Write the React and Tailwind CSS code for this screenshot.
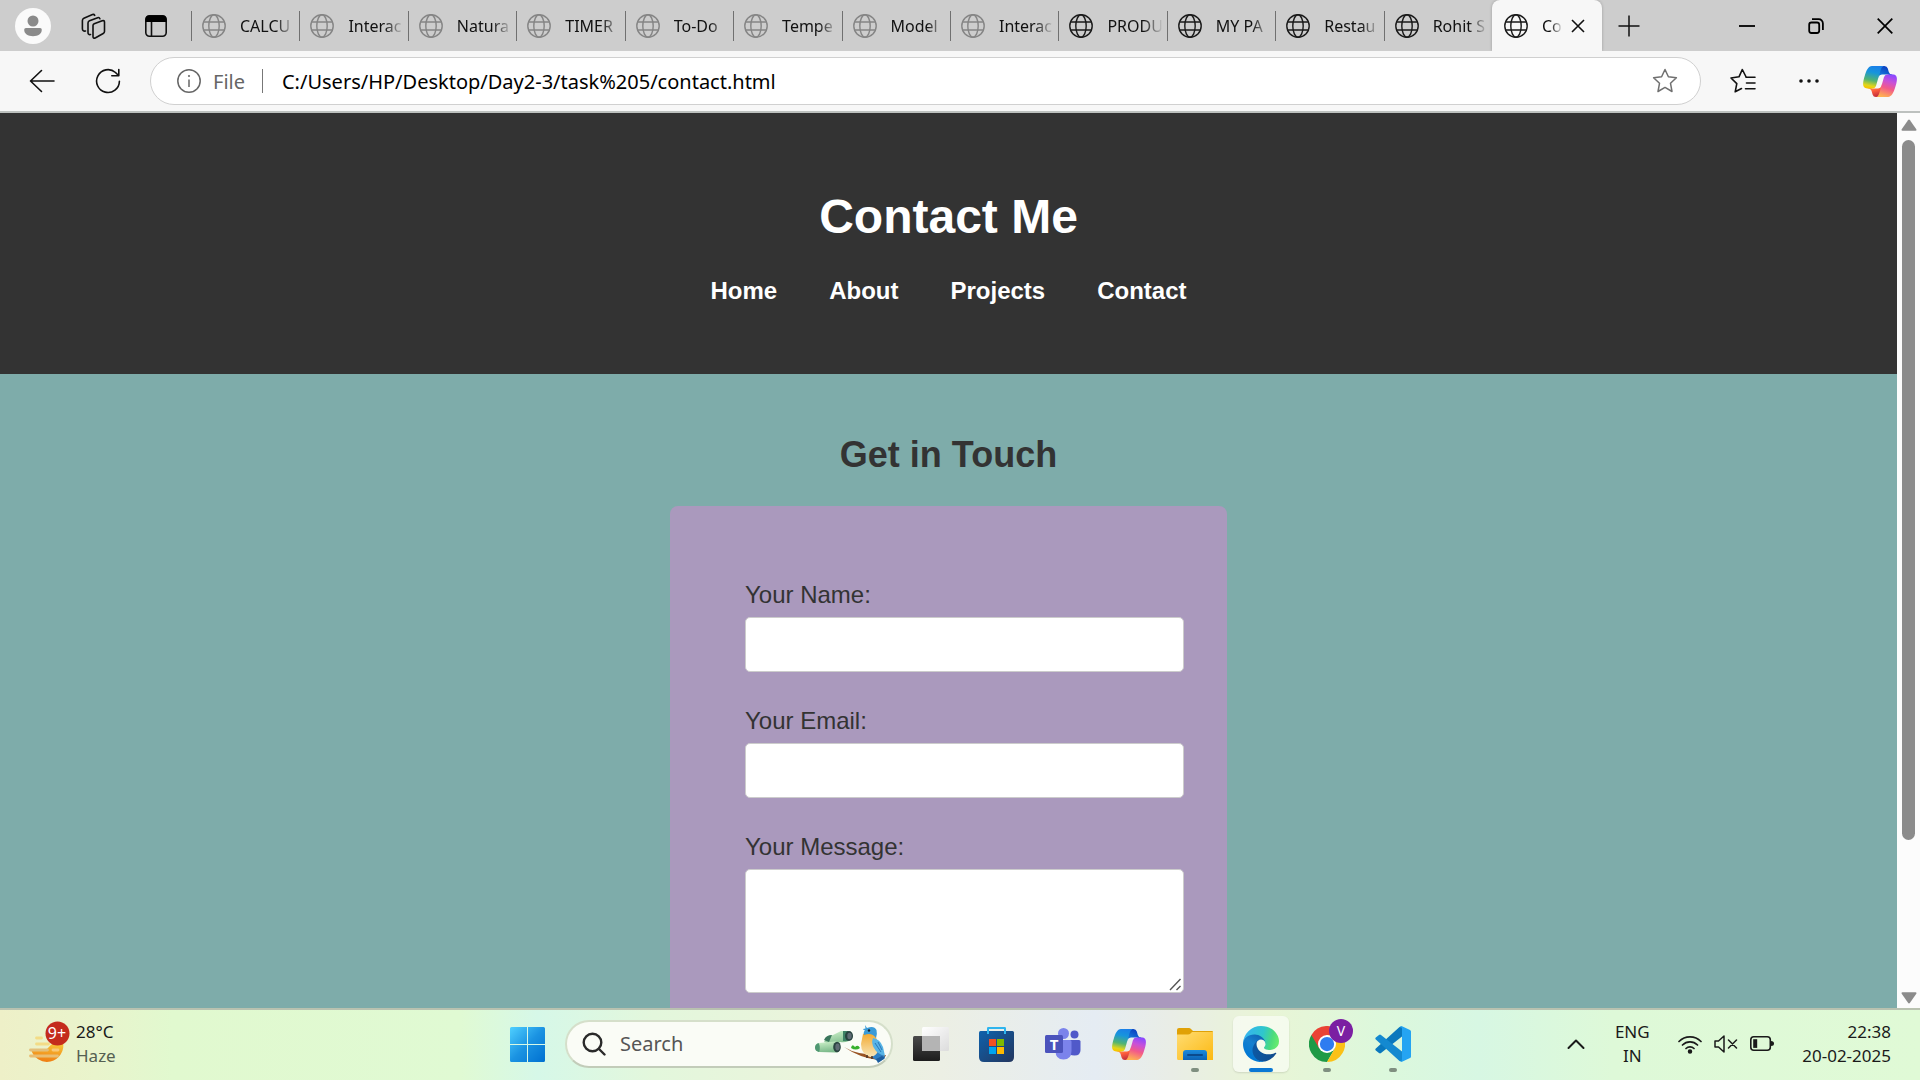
import React from "react";

const tabs = [
  { title: "CALCU", dim: true },
  { title: "Interac", dim: true },
  { title: "Natura", dim: true },
  { title: "TIMER", dim: true },
  { title: "To-Do", dim: true },
  { title: "Tempe", dim: true },
  { title: "Model", dim: true },
  { title: "Interac", dim: true },
  { title: "PRODU" },
  { title: "MY PA" },
  { title: "Restau" },
  { title: "Rohit S" },
];

function Globe({ dim }) {
  return (
    <svg
      viewBox="0 0 24 24"
      fill="none"
      strokeWidth="1.4"
      className={dim ? "size-6 shrink-0 stroke-[#858585]" : "size-6 shrink-0 stroke-[#1a1a1a]"}
      aria-hidden="true"
    >
      <circle cx="12" cy="12" r="11.2" />
      <ellipse cx="12" cy="12" rx="5.2" ry="11.2" />
      <path d="M2 8h20M2 16h20" />
    </svg>
  );
}

function Tab({ title, dim }) {
  return (
    <button type="button" className="flex min-w-0 flex-1 items-center">
      <span className="h-[30px] w-px shrink-0 bg-[#707070]" />
      <span className="flex min-w-0 flex-1 items-center gap-3.5 pr-1 pl-2.5">
        <Globe dim={dim} />
        <span className="min-w-0 flex-1 overflow-hidden text-left text-base leading-6 whitespace-nowrap [mask-image:linear-gradient(to_right,black_65%,transparent)]">
          {title}
        </span>
      </span>
    </button>
  );
}

function TabStrip() {
  return (
    <div className="flex h-[51px] items-center bg-[#cdcdcd] text-[#111]">
      <div className="flex w-[191px] shrink-0 items-center pl-[15px]">
        <button type="button" aria-label="Profile" className="grid size-9 place-items-center rounded-full bg-[#fafafa]">
          <svg viewBox="0 0 36 36" className="size-9" fill="#8a8a8a" aria-hidden="true">
            <circle cx="18" cy="13" r="5.5" />
            <path d="M11 20h14a1.8 1.8 0 0 1 1.8 1.8c0 4-3.600 6.400-8.800 6.400s-8.800-2.400-8.800-6.400A1.800 1.800 0 0 1 11 20z" />
          </svg>
        </button>
        <button type="button" aria-label="Workspaces" className="ml-[29px]">
          <svg viewBox="0 0 26 26" className="size-[26px]" fill="none" stroke="#111" strokeWidth="1.600" strokeLinejoin="round" strokeLinecap="round" aria-hidden="true">
            <path d="M13 12.500q0-1.200 1.200-1.700l8-3q2.300-.8 2.300 1.400v9.300q0 1.300-1.300 2l-7.600 4.200Q13 26 13 23.400z" />
            <path d="M10.500 21.500Q8 22 8 19.500V10q0-1.500 1.500-2.200l8.200-3.100q1.600-.6 2.200 1" />
            <path d="M5.500 18Q2.400 18.500 2.400 15.800V7.500q0-1.500 1.500-2.200L12.500 1.600q1.500-.6 2.200.8" />
          </svg>
        </button>
        <button type="button" aria-label="Tab actions" className="ml-[38px]">
          <svg viewBox="0 0 24 24" className="size-6" aria-hidden="true">
            <rect x="1.800" y="1.800" width="20.400" height="20.400" rx="3.600" fill="none" stroke="#111" strokeWidth="1.600" />
            <path d="M1.500 8V5.500a4 4 0 0 1 4-4h13a4 4 0 0 1 4 4V8z" fill="#000" />
            <path d="M7.500 8v14" stroke="#111" strokeWidth="1.600" />
          </svg>
        </button>
      </div>
      <div className="flex min-w-0 flex-1">
        {tabs.map((t, i) => (
          <Tab key={i} {...t} />
        ))}
      </div>
      <div className="flex w-[110px] shrink-0 items-center self-stretch rounded-t-lg bg-[#f7f7f7] pr-[17px] pl-3 shadow-[0_0_3px_rgba(0,0,0,0.25)] [clip-path:inset(-4px_-4px_0_-4px)]">
        <Globe />
        <span className="ml-3.5 w-[21px] overflow-hidden text-base leading-6 whitespace-nowrap [mask-image:linear-gradient(to_right,black_40%,transparent)]">
          Co
        </span>
        <button type="button" aria-label="Close tab" className="ml-auto">
          <svg viewBox="0 0 14 14" className="size-3.5" stroke="#111" strokeWidth="1.600" aria-hidden="true">
            <path d="M1 1l12 12M13 1L1 13" />
          </svg>
        </button>
      </div>
      <div className="flex w-[318px] shrink-0 items-center justify-between pr-[27px] pl-4">
        <button type="button" aria-label="New tab">
          <svg viewBox="0 0 22 22" className="size-[22px]" stroke="#111" strokeWidth="1.500" aria-hidden="true">
            <path d="M11 .5v21M.5 11h21" />
          </svg>
        </button>
        <div className="flex items-center gap-[53px]">
          <button type="button" aria-label="Minimize">
            <svg viewBox="0 0 16 16" className="size-4" stroke="#000" strokeWidth="1.800" aria-hidden="true">
              <path d="M0 8h16" />
            </svg>
          </button>
          <button type="button" aria-label="Restore">
            <svg viewBox="0 0 16 16" className="size-4" fill="none" stroke="#000" strokeWidth="1.800" aria-hidden="true">
              <rect x="1.200" y="4.500" width="10" height="10.500" rx="2.200" />
              <path d="M4 1.200h6.500A4.300 4.300 0 0 1 14.900 5.500V12" />
            </svg>
          </button>
          <button type="button" aria-label="Close">
            <svg viewBox="0 0 16 16" className="size-4" stroke="#000" strokeWidth="1.700" aria-hidden="true">
              <path d="M.7.7l14.600 14.600M15.300.7L.7 15.300" />
            </svg>
          </button>
        </div>
      </div>
    </div>
  );
}

function Copilot({ id, className }) {
  return (
    <svg viewBox="0 0 24 22" className={className} aria-hidden="true">
      <defs>
        <linearGradient id={id + "a"} x1="0.8" y1="0.2" x2="0.3" y2="1">
          <stop offset="0" stopColor="#0a3fc0" />
          <stop offset="1" stopColor="#1a85e0" />
        </linearGradient>
        <linearGradient id={id + "b"} x1="0.3" y1="0" x2="0.6" y2="1">
          <stop offset="0" stopColor="#ffb657" />
          <stop offset="0.5" stopColor="#ff5f3d" />
          <stop offset="1" stopColor="#c02b3c" />
        </linearGradient>
        <linearGradient id={id + "c"} x1="0.6" y1="0" x2="0.4" y2="1">
          <stop offset="0" stopColor="#1a7fe8" />
          <stop offset="0.3" stopColor="#1795dc" />
          <stop offset="0.65" stopColor="#52b471" />
          <stop offset="0.9" stopColor="#e2d51a" />
          <stop offset="1" stopColor="#f5c800" />
        </linearGradient>
        <linearGradient id={id + "d"} x1="0.7" y1="0" x2="0.4" y2="1">
          <stop offset="0" stopColor="#8c48ff" />
          <stop offset="0.3" stopColor="#c850d8" />
          <stop offset="0.6" stopColor="#f2598a" />
          <stop offset="1" stopColor="#ffb152" />
        </linearGradient>
      </defs>
      <path fill={`url(#${id}a)`} d="M17.533 1.829A2.528 2.528 0 0 0 15.110 0h-.737a2.531 2.531 0 0 0-2.484 2.087l-1.263 6.937.314-1.080a2.528 2.528 0 0 1 2.424-1.833h4.284l1.797.706 1.731-.706h-.505a2.528 2.528 0 0 1-2.423-1.829l-.715-2.453z" />
      <path fill={`url(#${id}b)`} d="M6.726 20.160A2.528 2.528 0 0 0 9.152 22h1.566c1.370 0 2.490-1.100 2.525-2.480l.170-6.690-.357 1.228a2.528 2.528 0 0 1-2.423 1.830h-4.320l-1.540-.842-1.667.843h.497c1.124 0 2.113.750 2.426 1.840l.697 2.432z" />
      <path fill={`url(#${id}c)`} d="M15 0H6.252c-2.500 0-4 3.331-5 6.662-1.184 3.947-2.734 9.225 1.750 9.225H6.780c1.130 0 2.120-.753 2.430-1.847.657-2.317 1.809-6.359 2.713-9.436.460-1.563.842-2.906 1.430-3.742A1.970 1.970 0 0 1 15 0z" />
      <path fill={`url(#${id}d)`} d="M9 22h8.749c2.500 0 4-3.332 5-6.663 1.184-3.948 2.734-9.227-1.750-9.227h-3.779a2.530 2.530 0 0 0-2.430 1.848 1149.200 1149.200 0 0 1-2.713 9.437c-.460 1.564-.842 2.907-1.430 3.743A1.970 1.970 0 0 1 9 22z" />
    </svg>
  );
}

function Toolbar() {
  return (
    <div className="flex h-[62px] items-center border-b-2 border-[#bdc1bf] bg-[#f7f7f7]">
      <div className="flex w-[150px] shrink-0 items-center gap-10 pl-[29px]">
        <button type="button" aria-label="Back">
          <svg viewBox="0 0 26 26" className="size-[26px]" fill="none" stroke="#111" strokeWidth="1.600" strokeLinecap="round" strokeLinejoin="round" aria-hidden="true">
            <path d="M25 13H1.500M12.500 2.500 1.500 13l11 10.500" />
          </svg>
        </button>
        <button type="button" aria-label="Refresh">
          <svg viewBox="0 0 26 26" className="size-[26px]" fill="none" stroke="#111" strokeWidth="1.600" strokeLinecap="round" strokeLinejoin="round" aria-hidden="true">
            <path d="M24.400 13.200A11.400 11.400 0 1 1 20.500 4.500L23.500 7.500M23.800 1.500v6.200h-7" />
          </svg>
        </button>
      </div>
      <div className="flex h-12 min-w-0 flex-1 items-center rounded-full border border-[#d0d0d0] bg-white pr-[22px] pl-[26px]">
        <svg viewBox="0 0 24 24" className="size-6 shrink-0" fill="none" stroke="#666" strokeWidth="1.500" aria-hidden="true">
          <circle cx="12" cy="12" r="11.200" />
          <path d="M12 10.500V18" />
          <circle cx="12" cy="7" r="0.700" fill="#666" strokeWidth="0.800" />
        </svg>
        <span className="ml-3 pt-0.5 text-xl text-[#666]">File</span>
        <span className="ml-[17px] h-6 w-px shrink-0 bg-[#777]" />
        <input
          type="text"
          aria-label="Address"
          defaultValue="C:/Users/HP/Desktop/Day2-3/task%205/contact.html"
          className="ml-[19px] min-w-0 flex-1 bg-transparent pt-0.5 text-xl text-black outline-none"
        />
        <button type="button" aria-label="Add to favorites">
          <svg viewBox="0 0 26 26" className="size-[26px]" fill="none" stroke="#707070" strokeWidth="1.500" strokeLinejoin="round" aria-hidden="true">
            <path d="M13 1.500l3.400 7.300 8 1-5.900 5.500 1.500 8.200-7-4.100-7 4.100 1.500-8.200-5.900-5.500 8-1z" />
          </svg>
        </button>
      </div>
      <div className="flex w-[219px] shrink-0 items-center pr-[23px] pl-[29px]">
        <button type="button" aria-label="Favorites">
          <svg viewBox="0 0 26 26" className="size-[26px]" fill="none" stroke="#111" strokeWidth="1.600" strokeLinejoin="round" strokeLinecap="round" aria-hidden="true">
            <path d="M16 8.800l-.4-.8L12.300 1.500 9 8.800l-8 1.200 5.800 5.600-1.600 8.200 6.300-3.300M16 9.200h9M16.500 15H25M15.500 20.800H25" />
          </svg>
        </button>
        <button type="button" aria-label="Settings and more" className="ml-[42px]">
          <svg viewBox="0 0 22 22" className="size-[22px]" fill="#111" aria-hidden="true">
            <circle cx="3" cy="11" r="1.800" />
            <circle cx="11" cy="11" r="1.800" />
            <circle cx="19" cy="11" r="1.800" />
          </svg>
        </button>
        <button type="button" aria-label="Copilot" className="ml-auto">
          <Copilot id="bar" className="h-[31px] w-[34px]" />
        </button>
      </div>
    </div>
  );
}

const fieldClass = "mt-1 block w-full rounded-[5px] border border-[#ccc] bg-white px-3 text-2xl";

function WebPage() {
  return (
    <div className="min-w-0 flex-1 overflow-hidden bg-[#7eacaa] font-['Liberation_Sans',Arial,sans-serif] text-[#333]">
      <header className="bg-[#333] pt-[76px] pb-[65px] text-center font-bold text-white">
        <h1 className="text-5xl leading-14">Contact Me</h1>
        <nav className="mt-7 flex justify-center gap-[52px] text-2xl leading-9">
          <a href="#home">Home</a>
          <a href="#about">About</a>
          <a href="#projects">Projects</a>
          <a href="#contact">Contact</a>
        </nav>
      </header>
      <section className="pt-[54px]">
        <h2 className="text-center text-4xl leading-[54px] font-bold">Get in Touch</h2>
        <form className="mx-auto mt-6 flex max-w-[557px] flex-col gap-[31px] rounded-lg bg-[#aa99bd] pt-[71px] pr-[43px] pb-[71px] pl-[75px] text-2xl leading-9">
          <div>
            <label htmlFor="name" className="block">Your Name:</label>
            <input id="name" type="text" className={fieldClass + " h-[55px]"} />
          </div>
          <div>
            <label htmlFor="email" className="block">Your Email:</label>
            <input id="email" type="email" className={fieldClass + " h-[55px]"} />
          </div>
          <div>
            <label htmlFor="message" className="block">Your Message:</label>
            <div className="relative">
              <textarea id="message" className={fieldClass + " h-[124px] resize-none"} />
              <svg viewBox="0 0 14 14" className="pointer-events-none absolute right-0.5 bottom-0.5 size-3.5" stroke="#555" strokeWidth="1.400" aria-hidden="true">
                <path d="M2 13L12.500 2M8.500 13l4-4" />
              </svg>
            </div>
          </div>
        </form>
      </section>
    </div>
  );
}

function ScrollBar() {
  return (
    <div className="flex w-[23px] shrink-0 flex-col items-center bg-[#fcfcfc] pt-1.5 pb-1">
      <svg viewBox="0 0 16 12" className="h-3 w-4" fill="#8b8b8b" aria-hidden="true">
        <path d="M7 1.200q1-1.400 2 0l6.300 9q.6 1.500-.8 1.500H1.500q-1.400 0-.8-1.500z" />
      </svg>
      <div className="flex w-full flex-1 flex-col items-center pt-[9px] pb-[9px]">
        <div className="h-[83%] w-[13px] rounded-full bg-[#8b8b8b]" />
      </div>
      <svg viewBox="0 0 16 12" className="h-3 w-4" fill="#8b8b8b" aria-hidden="true">
        <path d="M7 10.800q1 1.400 2 0l6.300-9Q15.900.3 14.500.3H1.500Q.1.300.7 1.800z" />
      </svg>
    </div>
  );
}

function WeatherIcon() {
  return (
    <svg viewBox="0 0 42 46" className="h-[46px] w-[42px]" aria-hidden="true">
      <defs>
        <linearGradient id="sun" x1="0.600" y1="0" x2="0.400" y2="1">
          <stop offset="0" stopColor="#f8c83a" />
          <stop offset="1" stopColor="#ef7c12" />
        </linearGradient>
      </defs>
      <path d="M34 21a16 16 0 0 1-32 7h16q3-4 8-7z" fill="url(#sun)" />
      <g strokeWidth="2.800" strokeLinecap="round">
        <path d="M7.500 17h5M7.500 23h12" stroke="#f3dc86" />
        <path d="M1.500 29h17" stroke="#e3bf7a" />
        <path d="M24 29h5" stroke="#f8c878" />
        <path d="M1.500 35h27" stroke="#e9bd72" />
      </g>
      <circle cx="28.500" cy="12.500" r="12" fill="#c42b1c" />
    </svg>
  );
}

function BirdArt() {
  return (
    <svg viewBox="0 0 72 38" className="h-[38px] w-[72px]" aria-hidden="true">
      <defs>
        <linearGradient id="bino" x1="0" y1="0" x2="0.300" y2="1">
          <stop offset="0" stopColor="#d2f4cd" />
          <stop offset="1" stopColor="#7cba8b" />
        </linearGradient>
        <linearGradient id="belly" x1="0" y1="0" x2="0" y2="1">
          <stop offset="0" stopColor="#f2a72c" />
          <stop offset="1" stopColor="#f8e6b8" />
        </linearGradient>
      </defs>
      <path d="M9 17q2-6 9-7l8-4h8v10q-5 2-9 1l-4 4z" fill="url(#bino)" />
      <path d="M9 15q2-5 8-5l-3 7z" fill="#39765b" />
      <path d="M28 6h5v10l-5 0z" fill="#3d8265" />
      <ellipse cx="34" cy="11" rx="4" ry="5" fill="#27423e" />
      <ellipse cx="34.500" cy="11" rx="2.200" ry="3.200" fill="#5f6c74" />
      <path d="M3.500 18L20 16.500q5 0 5 5.500t-4 5.500L4 27Q0 26 0 22.500T3.500 18z" fill="url(#bino)" />
      <path d="M3.500 18Q6 22 4 27 0 26 0 22.500T3.500 18z" fill="#4f9772" />
      <ellipse cx="22" cy="22" rx="3.800" ry="5.200" fill="#2a4540" />
      <ellipse cx="22.500" cy="22" rx="2.200" ry="3.400" fill="#5f6c74" />
      <path d="M29 22q14 9 42 8-1 4-8 5-18-2-34-13z" fill="#9a5424" />
      <path d="M36 23q1-5 4-1 3-3 5 1-4 3-9 0z" fill="#36b02d" />
      <path d="M58 17l12 15-1 2-5 3-9-6z" fill="#2f7fc4" />
      <path d="M61 34l6-3 3 2-7 5z" fill="#1d5d9e" />
      <path d="M48 9q8-4 13 3 2 7 3 12-3 8-9 8-9-3-9-13z" fill="url(#belly)" />
      <path d="M50 0l2 3q7-3 9.500 2 1 4-.5 8-4-6-12-3-1-3 1-4.500-2-1-2-1.500l2.500-.5z" fill="#3a9bd8" />
      <path d="M58 13q7 1 10 9l2 9q-8-2-11-8-3-5-1-10z" fill="#57b4e6" />
      <path d="M60 18l6 9M63 17l4 8" stroke="#2a76b8" strokeWidth="1" />
      <circle cx="54" cy="5.500" r="1.200" fill="#15212b" />
      <path d="M52 30v3M57 31v3" stroke="#4a3528" strokeWidth="1.500" />
    </svg>
  );
}

function StartIcon() {
  return (
    <svg viewBox="0 0 35 35" className="size-[35px]" aria-hidden="true">
      <defs>
        <linearGradient id="win" gradientUnits="userSpaceOnUse" x1="0" y1="0" x2="35" y2="35">
          <stop offset="0" stopColor="#4fd0ff" />
          <stop offset="0.500" stopColor="#1b93e2" />
          <stop offset="1" stopColor="#0070d0" />
        </linearGradient>
      </defs>
      <path fill="url(#win)" d="M1.500 0H17v17H0V1.500Q0 0 1.500 0zM18 0h15.500Q35 0 35 1.500V17H18zM0 18h17v17H1.500Q0 35 0 33.500zM18 18h17v15.500q0 1.500-1.500 1.500H18z" />
    </svg>
  );
}

function TaskViewIcon() {
  return (
    <svg viewBox="0 0 36 36" className="size-9" aria-hidden="true">
      <defs>
        <linearGradient id="tvd" x1="0" y1="0" x2="0" y2="1">
          <stop offset="0" stopColor="#4a4a4a" />
          <stop offset="1" stopColor="#1c1c1c" />
        </linearGradient>
        <linearGradient id="tvl" x1="0" y1="0" x2="1" y2="1">
          <stop offset="0" stopColor="#ffffff" />
          <stop offset="1" stopColor="#dcdcdc" />
        </linearGradient>
      </defs>
      <rect x="0" y="10" width="27" height="25" rx="1.500" fill="url(#tvd)" />
      <rect x="9" y="1" width="27" height="24" rx="1.500" fill="url(#tvl)" />
      <path d="M9 10h18v15H9z" fill="#b4b4b4" />
    </svg>
  );
}

function StoreIcon() {
  return (
    <svg viewBox="0 0 36 36" className="size-9" aria-hidden="true">
      <defs>
        <linearGradient id="store" x1="0" y1="0" x2="1" y2="1">
          <stop offset="0" stopColor="#0f62ad" />
          <stop offset="1" stopColor="#23365e" />
        </linearGradient>
      </defs>
      <path d="M1.500 5h32Q35 5 35 6.500V31q0 5-5 5H5q-5 0-5-5V6.500Q0 5 1.500 5z" fill="url(#store)" />
      <path d="M9 8V2.200Q9 2 9.200 2h16.600q.2 0 .2.200V8" fill="none" stroke="#2fb5ee" strokeWidth="2" />
      <path d="M10 13h7v7h-7z" fill="#f25022" />
      <path d="M18 13h7v7h-7z" fill="#7fba00" />
      <path d="M10 21h7v7h-7z" fill="#00a4ef" />
      <path d="M18 21h7v7h-7z" fill="#ffb900" />
    </svg>
  );
}

function TeamsIcon() {
  return (
    <svg viewBox="0 0 36 36" className="size-9" aria-hidden="true">
      <circle cx="29.500" cy="8.500" r="4" fill="#5059c9" />
      <path d="M22 14h12q1.500 0 1.500 1.500V24q0 5.500-6 5.500T22 24z" fill="#5059c9" />
      <circle cx="18.500" cy="7.500" r="5.500" fill="#7b83eb" />
      <path d="M10 14h15q1.500 0 1.500 1.500V25q0 8.500-8 8.500T10.500 25z" fill="#7b83eb" />
      <rect x="0" y="9" width="18" height="18" rx="1.500" fill="#4b53bc" />
      <text x="9" y="24" textAnchor="middle" fontSize="15" fontWeight="700" fill="#fff" fontFamily="Open Sans, sans-serif">T</text>
    </svg>
  );
}

function ExplorerIcon() {
  return (
    <svg viewBox="0 0 36 36" className="size-9" aria-hidden="true">
      <defs>
        <linearGradient id="fold" x1="0" y1="0" x2="1" y2="1">
          <stop offset="0" stopColor="#ffdc72" />
          <stop offset="1" stopColor="#fcb912" />
        </linearGradient>
        <linearGradient id="foldb" x1="0" y1="0" x2="0" y2="1">
          <stop offset="0" stopColor="#1b8bdc" />
          <stop offset="1" stopColor="#0c62b4" />
        </linearGradient>
      </defs>
      <path d="M0 4q0-2 2-2h10q1 0 2 1l2 2h19q1 0 1 1v4H0z" fill="#e0a106" />
      <path d="M0 8.500h11q1.500 0 2.500-1l1.500-1.500h21v28H1.500Q0 34 0 32.500z" fill="url(#fold)" />
      <path d="M6 34v-7q0-3 3-3h18q3 0 3 3v7z" fill="url(#foldb)" />
      <path d="M11 29h14" stroke="#0b4a8c" strokeWidth="2" strokeLinecap="round" />
    </svg>
  );
}

function EdgeIcon() {
  return (
    <svg viewBox="0 0 256 256" className="size-9" aria-hidden="true">
      <defs>
        <linearGradient id="e1" gradientUnits="userSpaceOnUse" x1="63" y1="178" x2="241" y2="178">
          <stop offset="0" stopColor="#0c59a4" />
          <stop offset="1" stopColor="#114a8b" />
        </linearGradient>
        <linearGradient id="e2" gradientUnits="userSpaceOnUse" x1="157" y1="70" x2="46" y2="225">
          <stop offset="0" stopColor="#0f5fae" />
          <stop offset="0.500" stopColor="#1580cf" />
          <stop offset="1" stopColor="#0078d4" />
        </linearGradient>
        <linearGradient id="e3" gradientUnits="userSpaceOnUse" x1="20" y1="50" x2="250" y2="110">
          <stop offset="0" stopColor="#35b5ee" />
          <stop offset="0.500" stopColor="#2fc6cc" />
          <stop offset="0.800" stopColor="#4bdb7d" />
          <stop offset="1" stopColor="#66eb6e" />
        </linearGradient>
      </defs>
      <path fill="url(#e1)" d="M231 190.500c-3.400 1.800-6.900 3.400-10.500 4.700a101.500 101.500 0 0 1-35.900 6.500c-47.300 0-88.500-32.500-88.500-74.300 0-11.400 6.400-21.900 16.400-27.300-42.800 1.800-53.800 46.400-53.800 72.500 0 73.900 68.100 81.400 82.800 81.400 7.900 0 19.800-2.300 27-4.600l1.300-.4a128.300 128.300 0 0 0 66.600-52.800 4 4 0 0 0-5.400-5.700z" />
      <path fill="url(#e2)" d="M105.700 241.400a79.200 79.200 0 0 1-22.700-21.300 80.700 80.700 0 0 1 29.500-120c3.200-1.500 8.500-4.100 15.600-4 10.100.1 19.600 4.900 25.700 13a31.900 31.900 0 0 1 6.300 18.800c0-.2 24.500-79.600-80-79.600-43.900 0-80 41.700-80 78.200-.2 19.300 4 38.500 12.100 56a128 128 0 0 0 156.400 67 75.500 75.500 0 0 1-62.800-8z" />
      <path fill="url(#e3)" d="M152.300 148.900c-.9 1-3.400 2.500-3.400 5.600 0 2.600 1.700 5.200 4.800 7.300 14.300 10 41.400 8.600 41.500 8.600 10.700 0 21.100-2.900 30.300-8.300A61.400 61.400 0 0 0 256 109c.3-22.400-8-37.300-11.300-43.900C223.500 23.900 177.700 0 128 0A128 128 0 0 0 0 126.200c.5-36.500 36.800-66 80-66 3.500 0 23.500.3 42 10.100 16.300 8.600 24.900 18.900 30.800 29.200 6.200 10.700 7.300 24.200 7.300 29.600 0 5.300-2.700 13.300-7.800 19.800z" />
    </svg>
  );
}

function ChromeIcon() {
  return (
    <svg viewBox="0 0 48 48" className="size-9" aria-hidden="true">
      <path d="M3.200 12A24 24 0 0 0 24 48L34.400 30 24 24z" fill="#1e9a46" />
      <path d="M44.800 12A24 24 0 0 1 24 48L34.400 30 24 12z" fill="#fbc116" />
      <path d="M3.200 12A24 24 0 0 1 44.800 12H24L13.600 30z" fill="#ea4335" />
      <circle cx="24" cy="24" r="12" fill="#fff" />
      <circle cx="24" cy="24" r="9.500" fill="#2f7cf0" />
    </svg>
  );
}

function CodeIcon() {
  return (
    <svg viewBox="0 0 36 36" className="size-9" aria-hidden="true">
      <path d="M27 10.500L6 27q-1 .8-2 0L.8 24.500q-1-1 0-2L24.500 1 27 .5z" fill="#0a78bd" />
      <path d="M27 25.500L6 9q-1-.8-2 0L.8 11.500q-1 1 0 2L24.500 35l2.500.5z" fill="#1489d0" />
      <path d="M27 .3L35 4q1 .5 1 1.500v25q0 1-1 1.500l-8 3.700q-1.500.4-2.500-.7 2.500.8 2.500-1.500v-31Q27 1 24.500 1.200 25.500-.2 27 .3z" fill="#25a4f2" />
    </svg>
  );
}

function AppButton({ label, active, running, children }) {
  return (
    <button
      type="button"
      aria-label={label}
      className={
        active
          ? "relative grid size-14 place-items-center rounded-md bg-white/55 shadow-[0_1px_2px_rgba(0,0,0,0.12)]"
          : "relative grid size-14 place-items-center"
      }
    >
      {children}
      {active && <span className="absolute inset-x-4 bottom-0 h-1 rounded-full bg-[#0a78d4]" />}
      {running && <span className="absolute bottom-0 left-6 h-1 w-2 rounded-full bg-[#7f8f80]" />}
    </button>
  );
}

function Taskbar() {
  return (
    <footer className="grid h-[72px] shrink-0 grid-cols-[1fr_auto_1fr] items-center border-t-2 border-[#b9c2b0] bg-[linear-gradient(to_right,#eef0c8_0%,#e9f4cc_5%,#e1f9cf_9%,#e0fad3_24%,#d6f8e8_28%,#e3f7dc_34%,#eaf4dc_42%,#ecefe4_49%,#e5ecf3_57%,#e9ede6_61%,#e9f5d6_66%,#dcf8dc_72%,#d7f7e3_77%,#def9d8_84%,#e0fad6_100%)] pb-0.5 font-['Noto_Sans',sans-serif]">
      <button type="button" className="flex items-center gap-[5px] pl-[29px] text-left">
        <span className="relative">
          <WeatherIcon />
          <span className="absolute top-0 left-4 w-6 text-center text-base leading-6 text-white">9+</span>
        </span>
        <span className="text-[17px] leading-6">
          <span className="block text-[#1a1a1a]">28°C</span>
          <span className="block text-[#556052]">Haze</span>
        </span>
      </button>

      <div className="flex items-center">
        <AppButton label="Start">
          <StartIcon />
        </AppButton>
        <label className="mx-2.5 flex h-12 w-[328px] items-center rounded-full border-2 border-[#d5dfca] border-b-[#c2ccb9] bg-[#fafcf6] pr-1 pl-[15px]">
          <svg viewBox="0 0 24 24" className="size-6 shrink-0" fill="none" stroke="#2a2a2a" strokeWidth="2.400" strokeLinecap="round" aria-hidden="true">
            <circle cx="10.500" cy="10.500" r="8.800" />
            <path d="M17 17l5.500 5.500" />
          </svg>
          <input
            type="text"
            aria-label="Search"
            placeholder="Search"
            className="ml-3.5 min-w-0 flex-1 bg-transparent text-xl outline-none placeholder:text-[#555]"
          />
          <BirdArt />
        </label>
        <div className="flex items-center gap-2.5">
          <AppButton label="Task view"><TaskViewIcon /></AppButton>
          <AppButton label="Microsoft Store"><StoreIcon /></AppButton>
          <AppButton label="Teams"><TeamsIcon /></AppButton>
          <AppButton label="Copilot"><Copilot id="task" className="h-[31px] w-[34px]" /></AppButton>
          <AppButton label="File Explorer" running><ExplorerIcon /></AppButton>
          <AppButton label="Edge" active><EdgeIcon /></AppButton>
          <AppButton label="Chrome" running>
            <ChromeIcon />
            <span className="absolute top-[3px] right-0.5 grid size-6 place-items-center rounded-full bg-[#7b1fa2] text-sm leading-none text-white">V</span>
          </AppButton>
          <AppButton label="Visual Studio Code" running><CodeIcon /></AppButton>
        </div>
      </div>

      <div className="flex items-center justify-end pr-[29px] text-[17px] leading-6 text-[#1a1a1a]">
        <button type="button" aria-label="Show hidden icons">
          <svg viewBox="0 0 18 18" className="size-[18px]" fill="none" stroke="#1a1a1a" strokeWidth="2" strokeLinecap="round" strokeLinejoin="round" aria-hidden="true">
            <path d="M1.500 13L9 5.500l7.500 7.500" />
          </svg>
        </button>
        <button type="button" className="ml-[27px] w-10 text-center">
          ENG
          <br />
          IN
        </button>
        <button type="button" aria-label="Network, volume and battery" className="ml-[26px] flex items-center gap-3">
          <svg viewBox="0 0 24 20" className="h-5 w-6" fill="none" stroke="#1a1a1a" strokeWidth="1.700" strokeLinecap="round" aria-hidden="true">
            <path d="M1 7.500a15.500 15.500 0 0 1 22 0M4.500 11a10.600 10.600 0 0 1 15 0M8 14.500a5.700 5.700 0 0 1 8 0" />
            <circle cx="12" cy="17.500" r="1.400" fill="#1a1a1a" />
          </svg>
          <svg viewBox="0 0 24 18" className="h-[18px] w-6" fill="none" stroke="#1a1a1a" strokeWidth="1.500" strokeLinejoin="round" strokeLinecap="round" aria-hidden="true">
            <path d="M1 6h3.500l5.500-5v16L4.500 12H1zM14.500 5l8 8M22.500 5l-8 8" />
          </svg>
          <svg viewBox="0 0 24 18" className="h-[18px] w-6" aria-hidden="true">
            <rect x="0.800" y="1.800" width="19.500" height="13.500" rx="3" fill="none" stroke="#1a1a1a" strokeWidth="1.600" />
            <path d="M3.200 4.200h4v8.700h-4z" fill="#1a1a1a" />
            <path d="M21 6q3 0 3 2.500T21 11z" fill="#1a1a1a" />
          </svg>
        </button>
        <button type="button" className="ml-7 text-right">
          22:38
          <br />
          20-02-2025
        </button>
      </div>
    </footer>
  );
}

export default function App() {
  return (
    <div className="flex h-screen flex-col overflow-hidden font-['Noto_Sans',sans-serif]">
      <TabStrip />
      <Toolbar />
      <main className="flex min-h-0 flex-1">
        <WebPage />
        <ScrollBar />
      </main>
      <Taskbar />
    </div>
  );
}
